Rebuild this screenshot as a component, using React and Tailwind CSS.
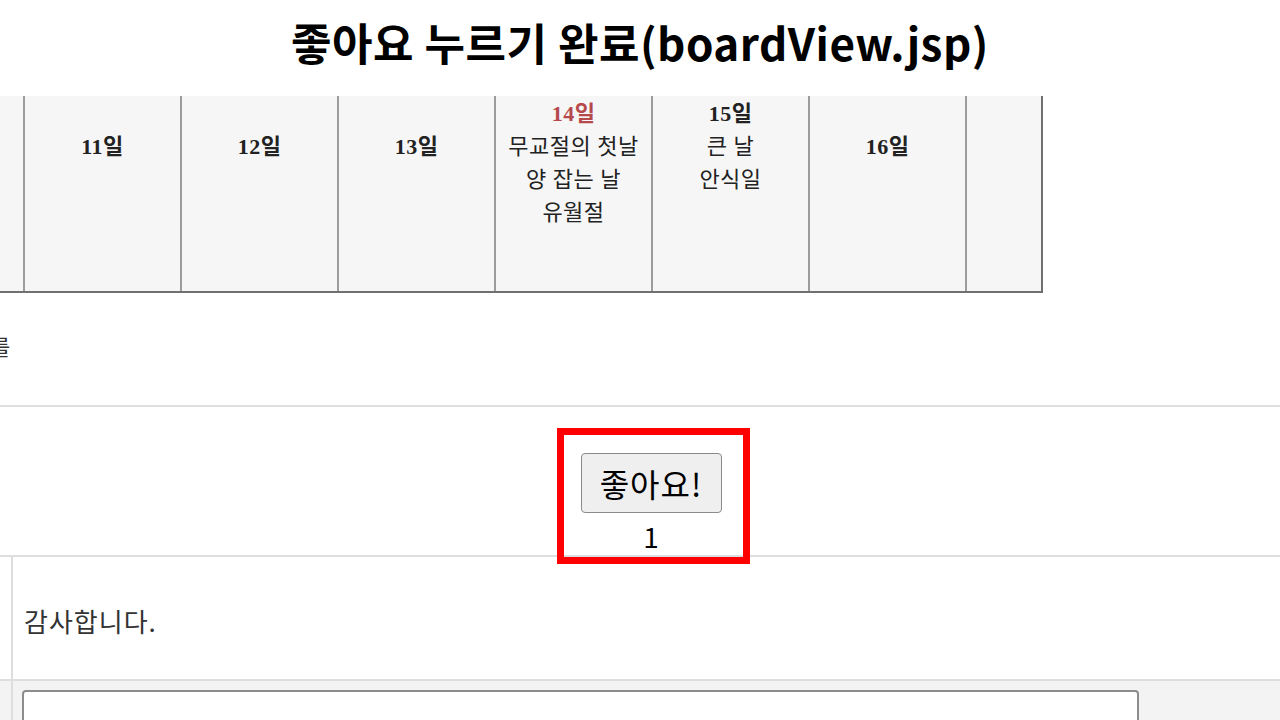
import React from 'react';

const SANS = { fontFamily: '"Noto Sans CJK KR", "Noto Sans", sans-serif' };
const SERIF = { fontFamily: '"Liberation Serif", "Noto Sans CJK KR", serif' };

const DAYS = [
  { lines: ['', '11일'] },
  { lines: ['', '12일'] },
  { lines: ['', '13일'] },
  { lines: ['14일', '무교절의 첫날', '양 잡는 날', '유월절'], red: true },
  { lines: ['15일', '큰 날', '안식일'] },
  { lines: ['', '16일'] },
];

export default function App() {
  return (
    <div className="relative w-[1280px] h-[720px] overflow-hidden bg-white text-[#222]" style={SANS}>
      {/* slide title */}
      <header className="h-[96px] flex justify-center pt-[14px]">
        <h1 className="text-[44px] font-bold leading-[56px] text-black tracking-[0.5px]">
          좋아요 누르기 완료(boardView.jsp)
        </h1>
      </header>

      {/* calendar capture */}
      <div className="flex w-[1043px] h-[197px] bg-[#f6f6f6] border-b-2 border-r-2 border-[#707070]" style={SERIF}>
        <div className="w-[25px] shrink-0 border-r-2 border-[#9c9c9c]" />
        {DAYS.map((d, i) => (
          <div key={i} className="w-[157px] shrink-0 border-r-2 border-[#9c9c9c] flex flex-col items-center pt-[1px]">
            {d.lines.map((l, j) => (
              <div
                key={j}
                className={
                  'h-[33px] leading-[33px] text-[22px] tracking-[0.5px] ' +
                  (j === 0 && d.red ? 'text-[#b5494b]' : '') +
                  (l.endsWith('일') && /\d/.test(l) ? ' font-bold' : '')
                }
              >
                {l}
              </div>
            ))}
          </div>
        ))}
        <div className="flex-1" />
      </div>

      {/* cut-off text */}
      <div className="h-[112px] flex items-center overflow-hidden pb-[8px]">
        <span className="-ml-[10px] text-[22px] text-[#333] leading-none">를</span>
      </div>

      {/* like area */}
      <div className="h-[152px] border-t-2 border-b-2 border-[#dedede] flex flex-col items-center pt-[46px] pl-[22px]">
        <button className="w-[141px] h-[60px] bg-[#efefef] border border-[#8a8a8a] rounded-[4px] text-[32px] leading-none text-black tracking-[1px]">
          좋아요!
        </button>
        <div className="text-[28px] leading-[34px] mt-[6px] text-black">1</div>
      </div>

      {/* comment row */}
      <div className="flex h-[124px] border-b-2 border-[#dedede]">
        <div className="w-[13px] shrink-0 border-r-2 border-[#dedede]" />
        <div className="flex items-center pl-[11px] pt-[4px] text-[26px] text-[#333] tracking-[1px]">감사합니다.</div>
      </div>

      {/* comment input row */}
      <div className="flex h-[60px] bg-[#f3f3f3]">
        <div className="w-[13px] shrink-0 border-r-2 border-[#dedede]" />
        <div className="pl-[9px] pt-[9px]">
          <div className="w-[1117px] h-[100px] bg-white border-2 border-[#8c8c8c] rounded-[4px]" />
        </div>
      </div>

      {/* annotation box */}
      <div className="absolute left-[557px] top-[428px] w-[193px] h-[136px] border-[7px] border-[#ff0000]" />
    </div>
  );
}
